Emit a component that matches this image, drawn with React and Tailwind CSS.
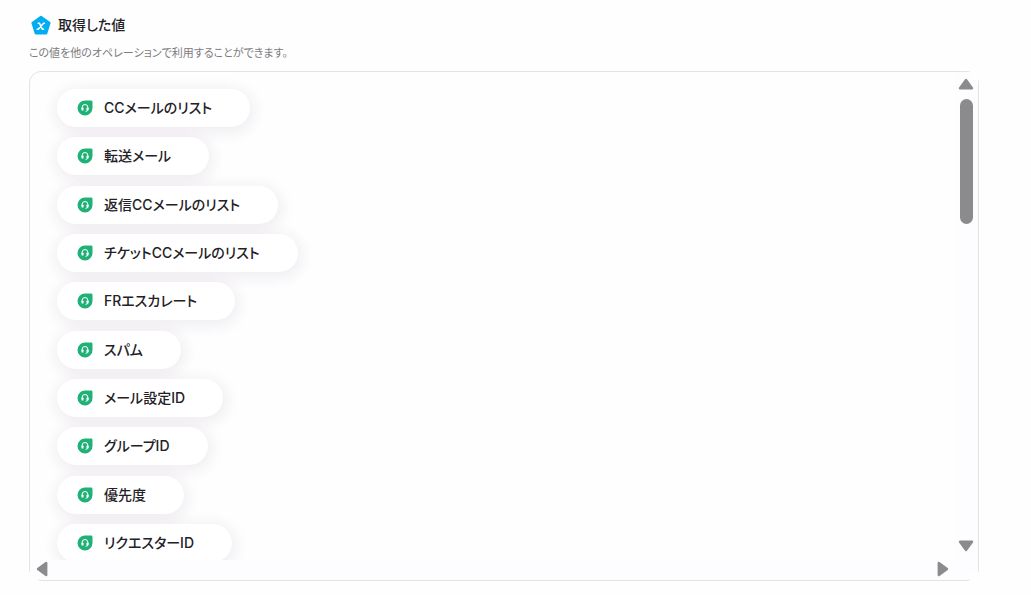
import React from 'react';

const values = [
  'CCメールのリスト',
  '転送メール',
  '返信CCメールのリスト',
  'チケットCCメールのリスト',
  'FRエスカレート',
  'スパム',
  'メール設定ID',
  'グループID',
  '優先度',
  'リクエスターID',
];

function VariableIcon() {
  return (
    <svg className="h-5 w-5 shrink-0" viewBox="0 0 20 20" aria-hidden="true">
      <path
        d="M10 1.9 L18.4 8 L15.2 18.2 H4.8 L1.6 8 Z"
        fill="#02adf2"
        stroke="#02adf2"
        strokeWidth="2.4"
        strokeLinejoin="round"
      />
      <path
        d="M7.2 8.2 H8.4 L11.3 14.2 H12.6 M13.4 8.2 H12.6 L7.2 14.2 H6.2"
        fill="none"
        stroke="#fff"
        strokeWidth="1.5"
        strokeLinecap="round"
        strokeLinejoin="round"
      />
    </svg>
  );
}

function HeadsetIcon() {
  return (
    <svg className="h-4 w-4 shrink-0" viewBox="0 0 16 16" aria-hidden="true">
      <path d="M8 0.5 H14.1 Q15.5 0.5 15.5 1.9 V8 A7.5 7.5 0 1 1 8 0.5 Z" fill="#20b176" />
      <path d="M5.1 8.6 V7.4 A2.9 2.9 0 0 1 10.9 7.4 V9.6 Q10.9 11.3 8.6 11.4" fill="none" stroke="#fff" strokeWidth="1" />
      <rect x="4.5" y="7.6" width="2" height="3" rx="0.7" fill="#fff" />
      <rect x="9.5" y="7.6" width="2" height="3" rx="0.7" fill="#fff" />
    </svg>
  );
}

function ScrollArrow({ label, rotation }) {
  return (
    <button type="button" aria-label={label} className="flex h-4 w-4 items-center justify-center">
      <svg className={`h-4 w-4 ${rotation}`} viewBox="0 0 16 16" aria-hidden="true">
        <path d="M8 4 L14 12.2 H2 Z" fill="#8b8a8d" stroke="#8b8a8d" strokeWidth="2.4" strokeLinejoin="round" />
      </svg>
    </button>
  );
}

export default function App() {
  return (
    <main className="min-h-screen bg-[#fefefe] pt-3 pr-[52px] pb-3 pl-[29px] font-['Inter','Noto_Sans_CJK_JP',sans-serif] text-[#232126] [font-feature-settings:'palt']">
      <header>
        <div className="flex h-[26px] items-center gap-[7px] pl-[2px]">
          <VariableIcon />
          <h1 className="text-[14px] leading-5 font-medium">取得した値</h1>
        </div>
        <p className="mt-[7px] text-[11px] leading-4 text-[#7d7c80]">
          この値を他のオペレーションで利用することができます。
        </p>
      </header>

      <section
        aria-label="取得した値"
        className="relative mt-[10px] grid grid-cols-[1fr_24px] rounded-xl border border-[#e3e2e5] bg-[#fefefe]"
      >
        <div className="h-[488px] overflow-hidden pt-[17px] pl-[27px]">
          <ul className="flex h-[473px] flex-col items-start justify-between">
            {values.map((value) => (
              <li
                key={value}
                className="flex h-[38px] items-center gap-[11px] rounded-full bg-white pr-[38px] pl-5 shadow-[1px_3px_14px_3px_rgba(80,40,85,0.08)]"
              >
                <HeadsetIcon />
                <span className="text-[14px] leading-5 font-medium whitespace-nowrap">{value}</span>
              </li>
            ))}
          </ul>
        </div>

        <div className="flex flex-col items-center bg-[#fdfcfe] pt-1 pb-[6px]">
          <ScrollArrow label="上へスクロール" rotation="rotate-0" />
          <div className="mt-[7px] h-[125px] w-[13px] rounded-full bg-[#8b8a8d]" />
          <div className="mt-auto">
            <ScrollArrow label="下へスクロール" rotation="rotate-180" />
          </div>
        </div>

        <div className="col-span-2 flex h-5 items-center justify-between rounded-b-xl bg-[#fdfcfe] pr-[27px] pb-[2px] pl-1">
          <ScrollArrow label="左へスクロール" rotation="-rotate-90" />
          <ScrollArrow label="右へスクロール" rotation="rotate-90" />
        </div>

        <span className="absolute -top-px -right-px h-[9px] w-[9px] bg-[#fefefe]" />
        <span className="absolute -right-px -bottom-px h-[9px] w-[9px] bg-[#fefefe]" />
        <span className="absolute -bottom-px -left-px h-[9px] w-[9px] bg-[#fefefe]" />
      </section>
    </main>
  );
}
